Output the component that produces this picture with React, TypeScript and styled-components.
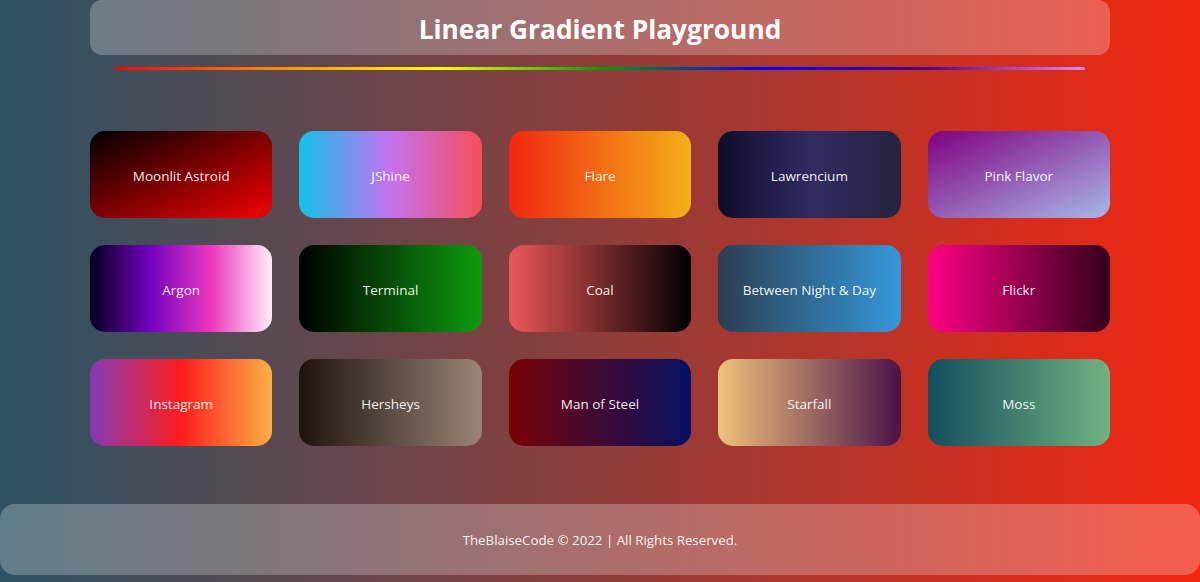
import React from "react";
import styled, { createGlobalStyle } from "styled-components";

const GlobalStyle = createGlobalStyle`
  * { box-sizing: border-box; }
  html, body { margin: 0; padding: 0; }
  body {
    min-height: 582px;
    background: linear-gradient(to right, #2c5364, #f12711);
    font-family: "Open Sans", "Noto Sans", sans-serif;
    color: #fff;
  }
`;

const Page = styled.div`
  display: flex;
  flex-direction: column;
  align-items: center;
  min-height: 582px;
`;

const Container = styled.div`
  width: 1020px;
  display: flex;
  flex-direction: column;
  align-items: center;
`;

const Header = styled.header`
  width: 100%;
  height: 55px;
  border-radius: 12px;
  background: rgba(255, 255, 255, 0.25);
  display: flex;
  align-items: center;
  justify-content: center;
  padding-top: 2px;
`;

const Title = styled.h1`
  margin: 0;
  font-size: 26.3px;
  font-weight: 700;
  color: #fff;
`;

const Rainbow = styled.div`
  width: 970px;
  height: 3px;
  margin-top: 12px;
  border-radius: 2px;
  background: linear-gradient(
    to right,
    #ff0000,
    #ff8c00,
    #ffff00,
    #00a000,
    #0000ff,
    #4b0082,
    #ee82ee
  );
`;

const Grid = styled.div`
  width: 100%;
  margin-top: 61px;
  display: grid;
  grid-template-columns: repeat(5, 1fr);
  column-gap: 27px;
  row-gap: 27px;
`;

const Card = styled.div<{ $bg: string }>`
  height: 87px;
  border-radius: 15px;
  background: ${(p) => p.$bg};
  display: flex;
  align-items: center;
  justify-content: center;
  padding-top: 2px;
  font-size: 13.5px;
  font-weight: 500;
  color: rgba(255, 255, 255, 0.95);
`;

const Footer = styled.footer`
  width: 1200px;
  height: 71px;
  margin-top: 58px;
  border-radius: 15px;
  background: rgba(255, 255, 255, 0.25);
  display: flex;
  align-items: center;
  justify-content: center;
  font-size: 13.3px;
  font-weight: 500;
  color: rgba(255, 255, 255, 0.95);
`;

const gradients: { name: string; bg: string }[] = [
  { name: "Moonlit Astroid", bg: "linear-gradient(to bottom right, #000000, #f50000)" },
  { name: "JShine", bg: "linear-gradient(to right, #12c2e9, #c471ed, #f64f59)" },
  { name: "Flare", bg: "linear-gradient(to right, #f12711, #f5af19)" },
  { name: "Lawrencium", bg: "linear-gradient(to right, #0f0c29, #302b63, #24243e)" },
  { name: "Pink Flavor", bg: "linear-gradient(to bottom right, #800080, #a8b8e8)" },
  { name: "Argon", bg: "linear-gradient(to right, #03001e, #7303c0, #ec38bc, #fdeff9)" },
  { name: "Terminal", bg: "linear-gradient(to right, #000000, #0f9b0f)" },
  { name: "Coal", bg: "linear-gradient(to right, #eb5757, #000000)" },
  { name: "Between Night & Day", bg: "linear-gradient(to right, #2c3e50, #3498db)" },
  { name: "Flickr", bg: "linear-gradient(to right, #ff0084, #33001b)" },
  { name: "Instagram", bg: "linear-gradient(to right, #833ab4, #fd1d1d, #fcb045)" },
  { name: "Hersheys", bg: "linear-gradient(to right, #1e130c, #9a8478)" },
  { name: "Man of Steel", bg: "linear-gradient(to right, #780206, #061161)" },
  { name: "Starfall", bg: "linear-gradient(to right, #f0c27b, #4b1248)" },
  { name: "Moss", bg: "linear-gradient(to right, #134e5e, #71b280)" },
];

export default function App() {
  return (
    <>
      <GlobalStyle />
      <Page>
        <Container>
          <Header>
            <Title>Linear Gradient Playground</Title>
          </Header>
          <Rainbow />
          <Grid>
            {gradients.map((g) => (
              <Card key={g.name} $bg={g.bg}>
                {g.name}
              </Card>
            ))}
          </Grid>
        </Container>
        <Footer>TheBlaiseCode © 2022 | All Rights Reserved.</Footer>
      </Page>
    </>
  );
}
